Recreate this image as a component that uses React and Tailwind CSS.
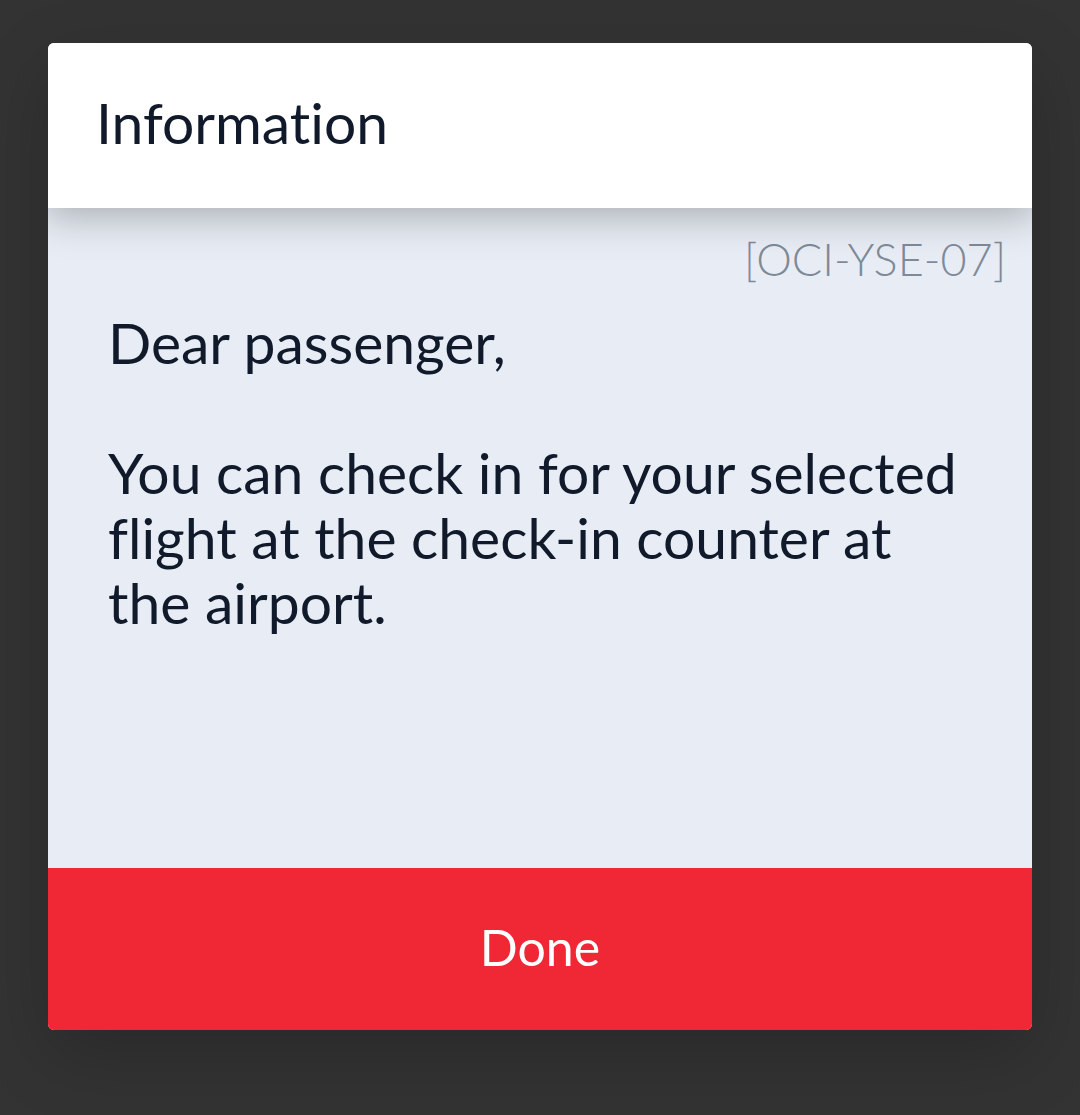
export default function App() {
  return (
    <main className="min-h-screen bg-[#333333] px-12 pt-[43px] pb-[85px] font-['Lato','Open_Sans',sans-serif] text-[#111a2a] [font-variant-ligatures:none]">
      <section
        role="dialog"
        aria-labelledby="dialog-title"
        className="flex w-full flex-col overflow-hidden rounded-md bg-[#e8edf5] shadow-[0_24px_72px_rgba(0,0,0,0.2)]"
      >
        <header className="relative bg-white px-12 pt-[47px] pb-[53px] shadow-[0_6px_36px_4px_rgba(0,0,0,0.26)]">
          <h1 id="dialog-title" className="text-[57px] leading-[65px]">
            Information
          </h1>
        </header>
        <div className="min-h-[660px] pt-[23px]">
          <p className="pr-[26px] text-right text-[45px] leading-[56px] font-light text-[#7f8a99]">
            [OCI-YSE-07]
          </p>
          <div className="px-[60px] pt-[23px] text-[57px] leading-[65px]">
            <p>Dear passenger,</p>
            <p className="pt-[65px]">
              You can check in for your selected flight at the check-in counter at the airport.
            </p>
          </div>
        </div>
        <button type="button" className="w-full bg-[#f02735] pt-12 pb-[52px] text-[50px] leading-[62px] text-white">
          Done
        </button>
      </section>
    </main>
  );
}
